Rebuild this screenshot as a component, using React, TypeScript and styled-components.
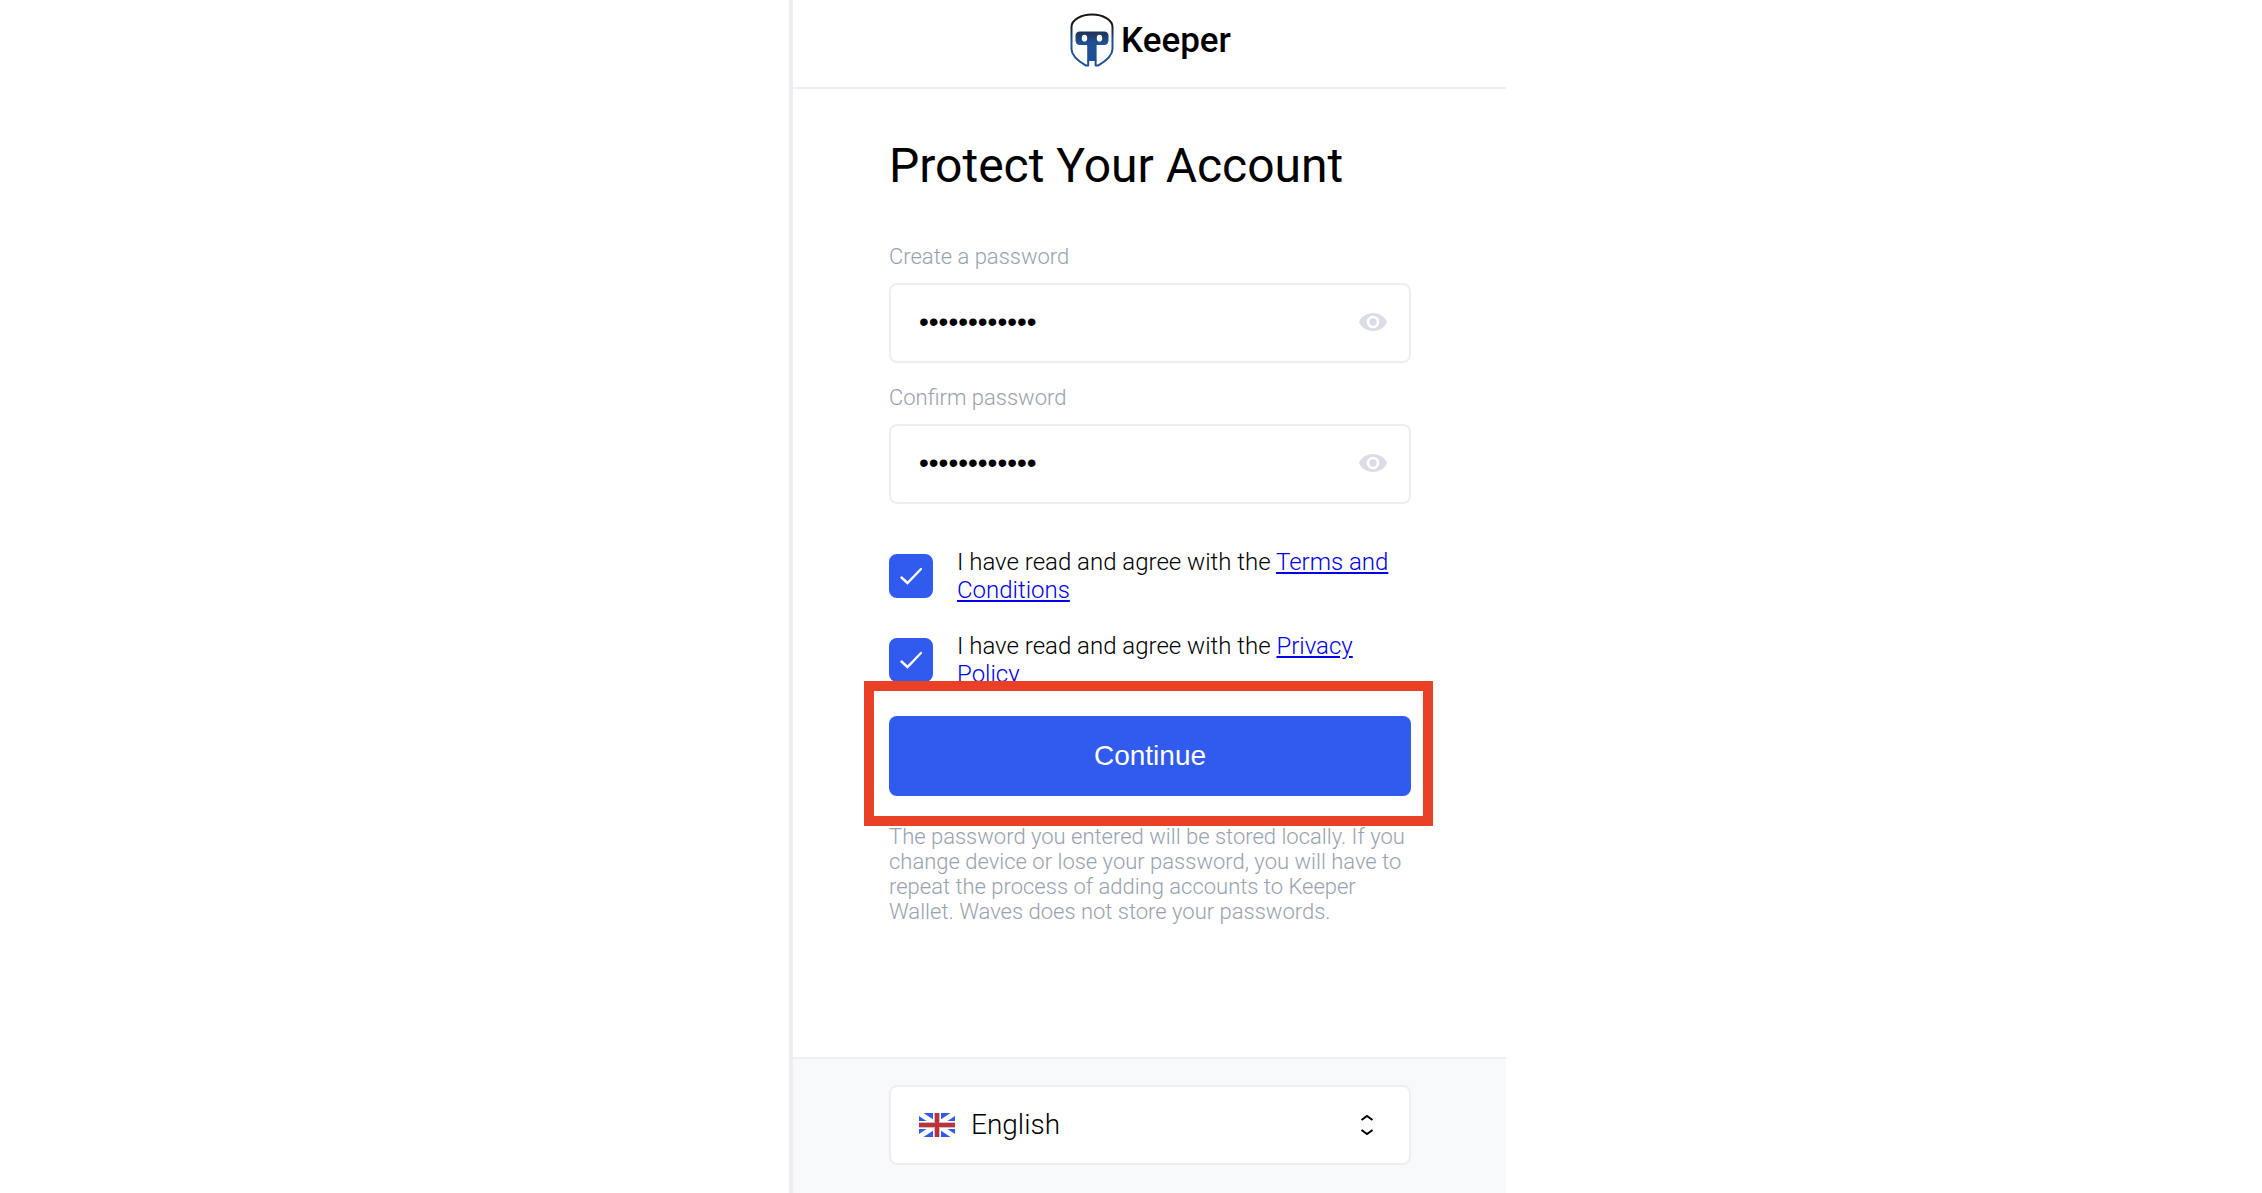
import React from "react";
import styled, { createGlobalStyle } from "styled-components";

const line = "#ededf3";
const accent = "#305bee";
const muted = "#97a2af";

const GlobalStyle = createGlobalStyle`
  *, *::before, *::after { box-sizing: border-box; }
  body {
    margin: 0;
    background: #fff;
    color: #000;
    font-family: Roboto, "Liberation Sans", sans-serif;
  }
`;

const Page = styled.div`
  display: flex;
  justify-content: center;
  min-height: 100vh;
  padding-left: 33px;
`;

const Panel = styled.div`
  display: flex;
  flex-direction: column;
  width: 100%;
  max-width: 717px;
  border-left: 4px solid ${line};
`;

const Header = styled.header`
  display: flex;
  justify-content: center;
  align-items: flex-start;
  gap: 7px;
  padding: 13px 0 19px 2px;
  border-bottom: 2px solid ${line};
`;

const Brand = styled.span`
  font-size: 35px;
  line-height: 55px;
  font-weight: 500;
`;

const Main = styled.main`
  flex: 1;
  padding: 49px 95px 48px 96px;
`;

const Title = styled.h1`
  margin: 0 0 50px;
  font-size: 48px;
  line-height: 56px;
  font-weight: 400;
`;

const Field = styled.div`
  margin-bottom: 22px;
`;

const FieldLabel = styled.label`
  display: block;
  margin-bottom: 14px;
  color: ${muted};
  font-size: 22px;
  line-height: 25px;
  font-weight: 300;
`;

const FieldBox = styled.div`
  display: flex;
  align-items: center;
  height: 80px;
  padding: 0 22px 2px 28px;
  border: 2px solid ${line};
  border-radius: 8px;
  background: #fff;
`;

const PasswordInput = styled.input`
  flex: 1;
  min-width: 0;
  height: 100%;
  padding: 0;
  border: 0;
  outline: 0;
  background: transparent;
  color: #000;
  font-family: "Liberation Sans", Arial, sans-serif;
  font-size: 28px;
`;

const RevealButton = styled.button`
  display: flex;
  padding: 0;
  border: 0;
  background: none;
  color: #dadde6;
  cursor: pointer;
`;

const Agreements = styled.div`
  display: flex;
  flex-direction: column;
  gap: 28px;
  margin: 44px 0 28px;
`;

const Agreement = styled.div`
  display: flex;
  align-items: center;
  gap: 24px;
`;

const CheckWrap = styled.span`
  display: grid;
  flex: none;
  width: 44px;
  height: 44px;

  > * {
    grid-area: 1 / 1;
  }

  > svg {
    pointer-events: none;
    visibility: hidden;
  }

  > input:checked + svg {
    visibility: visible;
  }
`;

const Checkbox = styled.input`
  appearance: none;
  width: 44px;
  height: 44px;
  margin: 0;
  border: 2px solid ${line};
  border-radius: 8px;
  background: #fff;

  &:checked {
    border-color: ${accent};
    background: ${accent};
  }
`;

const AgreementLabel = styled.label`
  font-size: 24px;
  line-height: 28px;
  font-weight: 300;
`;

const TextLink = styled.a`
  color: #0000ee;
  text-decoration: underline;
`;

const Submit = styled.div`
  position: relative;
`;

const Highlight = styled.div`
  position: absolute;
  inset: -35px -22px -30px -25px;
  border: 10px solid #ea4025;
  pointer-events: none;
`;

const PrimaryButton = styled.button`
  display: block;
  width: 100%;
  height: 80px;
  border: 0;
  border-radius: 8px;
  background: ${accent};
  color: #fff;
  font-family: "Liberation Sans", Arial, sans-serif;
  font-size: 28px;
  cursor: pointer;
`;

const Note = styled.p`
  margin: 28px 0 0;
  color: ${muted};
  font-size: 22px;
  line-height: 25px;
  font-weight: 300;
`;

const Footer = styled.footer`
  padding: 26px 95px 28px 96px;
  border-top: 2px solid ${line};
  background: #f8f9fb;
`;

const LanguageBox = styled.div`
  display: grid;
  grid-template-columns: 28px 36px 1fr 16px 34px;
  align-items: center;
  height: 80px;
  border: 2px solid ${line};
  border-radius: 8px;
  background: #fff;

  > svg {
    grid-row: 1;
    z-index: 1;
    pointer-events: none;
  }
`;

const LanguageSelect = styled.select`
  grid-area: 1 / 1 / 2 / -1;
  appearance: none;
  width: 100%;
  height: 100%;
  padding: 0 60px 2px 80px;
  border: 0;
  outline: 0;
  background: transparent;
  color: #000;
  font-family: Roboto, "Liberation Sans", sans-serif;
  font-size: 28px;
  font-weight: 300;
`;

function KeeperLogo() {
  return (
    <svg width="44" height="55" viewBox="0 0 44 55" aria-hidden="true">
      <defs>
        <linearGradient id="helmet" x1="0" y1="0" x2="0" y2="1">
          <stop offset="0.2" stopColor="#14161b" />
          <stop offset="0.5" stopColor="#1f5095" />
        </linearGradient>
        <linearGradient id="visor" x1="0" y1="0" x2="0" y2="1">
          <stop offset="0" stopColor="#1d3152" />
          <stop offset="0.4" stopColor="#1f5095" />
        </linearGradient>
      </defs>
      <path
        d="M18.2 47V52.6H16C8 48 1.500 42 1.500 36V14C1.500 7 11 1.600 22 1.600S42.500 7 42.500 14V36C42.500 42 36 48 28 52.600H25.600V47"
        fill="none"
        stroke="url(#helmet)"
        strokeWidth="2"
        strokeLinejoin="round"
      />
      <path
        fillRule="evenodd"
        fill="url(#visor)"
        d="M10 18.500H34Q38.500 18.500 38.500 23V27Q38.500 32 34 32H26.600V48H17.200V32H10Q5.500 32 5.500 27V23Q5.500 18.500 10 18.500ZM14.500 21.800A2.700 3.400 0 1 0 14.500 28.600A2.700 3.400 0 1 0 14.500 21.800ZM29.500 21.800A2.700 3.400 0 1 0 29.500 28.600A2.700 3.400 0 1 0 29.500 21.800Z"
      />
    </svg>
  );
}

function EyeIcon() {
  return (
    <svg width="28" height="28" viewBox="0 0 28 28" aria-hidden="true">
      <path
        fill="currentColor"
        fillRule="evenodd"
        d="M14 5C7.500 5 2.200 8.600 0 14C2.200 19.400 7.500 23 14 23S25.800 19.400 28 14C25.800 8.600 20.500 5 14 5ZM14 7.700A6.300 6.300 0 1 1 14 20.300A6.300 6.300 0 1 1 14 7.700Z"
      />
      <circle cx="14" cy="14" r="3.700" fill="currentColor" />
    </svg>
  );
}

function CheckIcon() {
  return (
    <svg width="44" height="44" viewBox="0 0 44 44" aria-hidden="true">
      <path
        d="M12.500 23.500L18.500 29L32 15"
        fill="none"
        stroke="#fff"
        strokeWidth="2.400"
        strokeLinecap="round"
      />
    </svg>
  );
}

function FlagIcon() {
  return (
    <svg
      width="36"
      height="24"
      viewBox="0 0 36 24"
      style={{ gridColumn: 2 }}
      aria-hidden="true"
    >
      <path fill={accent} d="M0 0H36V24H0Z" />
      <path stroke="#fff" strokeWidth="5" d="M0 0L36 24M36 0L0 24" />
      <path fill="#fff" d="M14 0H22V24H14ZM0 8H36V16H0Z" />
      <path fill="#c0c3cc" d="M15 0H21V24H15ZM0 9H36V15H0Z" />
      <path fill="#c22f35" d="M16 0H20V24H16ZM0 10H36V14H0Z" />
    </svg>
  );
}

function SortIcon() {
  return (
    <svg
      width="16"
      height="24"
      viewBox="0 0 16 24"
      style={{ gridColumn: 4 }}
      aria-hidden="true"
    >
      <path
        d="M2.500 7L8 3L13.500 7M2.500 17L8 21L13.500 17"
        fill="none"
        stroke="#000"
        strokeWidth="2"
      />
    </svg>
  );
}

function PasswordField({ id, label }: { id: string; label: string }) {
  const [visible, setVisible] = React.useState(false);
  return (
    <Field>
      <FieldLabel htmlFor={id}>{label}</FieldLabel>
      <FieldBox>
        <PasswordInput
          id={id}
          type={visible ? "text" : "password"}
          defaultValue="abcdefghijkl"
        />
        <RevealButton
          type="button"
          aria-label="Show password"
          onClick={() => setVisible(!visible)}
        >
          <EyeIcon />
        </RevealButton>
      </FieldBox>
    </Field>
  );
}

function AgreementRow({ id, link }: { id: string; link: string }) {
  return (
    <Agreement>
      <CheckWrap>
        <Checkbox id={id} type="checkbox" defaultChecked />
        <CheckIcon />
      </CheckWrap>
      <AgreementLabel htmlFor={id}>
        I have read and agree with the <TextLink href="#">{link}</TextLink>
      </AgreementLabel>
    </Agreement>
  );
}

export default function App() {
  return (
    <>
      <GlobalStyle />
      <Page>
        <Panel>
          <Header>
            <KeeperLogo />
            <Brand>Keeper</Brand>
          </Header>
          <Main>
            <Title>Protect Your Account</Title>
            <form onSubmit={(event) => event.preventDefault()}>
              <PasswordField id="create" label="Create a password" />
              <PasswordField id="confirm" label="Confirm password" />
              <Agreements>
                <AgreementRow id="terms" link="Terms and Conditions" />
                <AgreementRow id="privacy" link="Privacy Policy" />
              </Agreements>
              <Submit>
                <PrimaryButton type="submit">Continue</PrimaryButton>
                <Highlight />
              </Submit>
            </form>
            <Note>
              The password you entered will be stored locally. If you change
              device or lose your password, you will have to repeat the process
              of adding accounts to Keeper Wallet. Waves does not store your
              passwords.
            </Note>
          </Main>
          <Footer>
            <LanguageBox>
              <LanguageSelect aria-label="Language" defaultValue="en">
                <option value="en">English</option>
              </LanguageSelect>
              <FlagIcon />
              <SortIcon />
            </LanguageBox>
          </Footer>
        </Panel>
      </Page>
    </>
  );
}
